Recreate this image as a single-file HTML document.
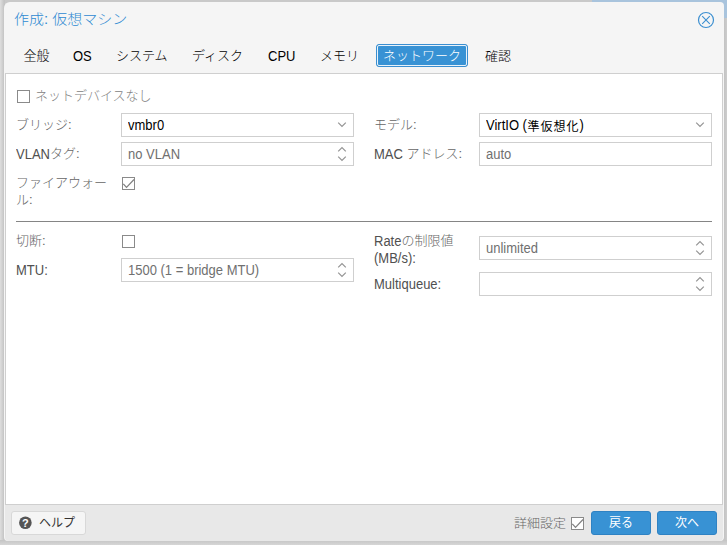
<!DOCTYPE html>
<html lang="ja">
<head>
<meta charset="utf-8">
<title>作成: 仮想マシン</title>
<style>
html,body{margin:0;padding:0;}
body{width:727px;height:545px;overflow:hidden;position:relative;background:#d2d2d2;
  font-family:"Liberation Sans","Noto Sans CJK JP",sans-serif;font-size:13px;color:#000;font-weight:300;}
.abs{position:absolute;}
#bgtop{left:0;top:0;width:727px;height:3px;background:linear-gradient(90deg,#c9c9c9 0,#c9c9c9 592px,#a9c4dd 592px);}
#bgright{left:723px;top:0;width:4px;height:18px;background:#a9c4dd;}
#bgright2{left:723px;top:18px;width:4px;height:527px;background:linear-gradient(90deg,#c0c0c0 0,#c6c6c6 2px,#cdcdcd 4px);}
#bgleft{left:0;top:0;width:5px;height:545px;background:linear-gradient(90deg,#dedede 0,#d2d2d2 2px,#c4c4c4 4px);}
#bgbottom{left:0;top:540px;width:727px;height:5px;background:linear-gradient(180deg,#c4c4c4 0,#cccccc 2px,#d6d6d6 5px);}
#win{left:4px;top:2px;width:720px;height:539px;background:#f5f5f5;border-radius:6px 4px 4px 4px;box-sizing:border-box;}
#title{left:14px;top:9px;font-size:15px;line-height:20px;color:#2f8ad2;white-space:nowrap;font-weight:300;transform:scaleY(0.94);transform-origin:0 80%;}
.tab{top:43.5px;height:23px;line-height:23px;font-size:13px;color:#000;white-space:nowrap;}
.k{display:inline-block;transform:translateY(1px) scaleY(0.92);transform-origin:0 85%;}
.tl{display:inline-block;transform:translateY(-0.5px) scaleY(1.065);transform-origin:0 0;}
#tabact{left:376px;top:44px;width:92px;height:23px;box-sizing:border-box;border:1px solid #3a8ed0;border-radius:3px;background:#3892d4;}
#tabact i{position:absolute;left:0;top:0;right:0;bottom:0;border:1px solid #e8f2fa;border-radius:2px;}
#body{left:5px;top:73px;width:718px;height:432px;box-sizing:border-box;background:#fff;border:1px solid #cfcfcf;}
.lbl{color:#666;font-size:13px;line-height:17px;white-space:nowrap;}
.l{color:#505050;display:inline-block;transform:scaleY(1.075);transform-origin:0 0;}
.fld{height:24px;box-sizing:border-box;border:1px solid #cfcfcf;background:#fff;font-size:13px;line-height:22px;padding-left:6px;color:#000;white-space:nowrap;}
.fld.em{color:#707070;}
.fld .j{font-weight:400;font-size:12px;letter-spacing:1px;margin-left:0.5px;position:relative;top:1.5px;color:#000;}
.fld span{display:inline-block;transform:scaleY(1.067);transform-origin:0 0;}
.cb{width:13px;height:13px;box-sizing:border-box;border:1px solid #8a8a8a;background:#fff;}
#hr{left:16px;top:221px;width:696px;height:1px;background:#858585;}
#foot{left:5px;top:505px;width:718px;height:36px;background:#e8e8e8;border-radius:0 0 4px 4px;}
.btn{height:24px;box-sizing:border-box;border-radius:3px;font-size:12px;font-weight:400;line-height:22px;text-align:center;white-space:nowrap;}
.btnb{background:#3892d4;border:1px solid #2f82c3;color:#fff;}
.btng{background:#f5f5f5;border:1px solid #d8d8d8;color:#333;}
svg{position:absolute;overflow:visible;}
</style>
</head>
<body>
<div class="abs" id="bgtop"></div>
<div class="abs" id="bgright"></div>
<div class="abs" id="bgright2"></div>
<div class="abs" id="bgleft"></div>
<div class="abs" id="bgbottom"></div>
<div class="abs" id="win"></div>
<div class="abs" id="title">作成: 仮想マシン</div>

<svg style="left:697px;top:11px" width="18" height="18" viewBox="0 0 18 18"><circle cx="9" cy="9" r="7.5" fill="none" stroke="#3c8fd0" stroke-width="1.2"/><path d="M5.2 5.2 L12.8 12.8 M12.8 5.2 L5.2 12.8" stroke="#3c8fd0" stroke-width="1.1" fill="none"/></svg>

<div class="abs tab" style="left:23.5px">全般</div>
<div class="abs tab" style="left:73px"><span class="tl">OS</span></div>
<div class="abs tab" style="left:116px">システム</div>
<div class="abs tab" style="left:192px">ディスク</div>
<div class="abs tab" style="left:268px"><span class="tl">CPU</span></div>
<div class="abs tab" style="left:320px">メモリ</div>
<div class="abs" id="tabact"><i></i></div>
<div class="abs tab" style="left:383px;top:44px;color:#fff">ネットワーク</div>
<div class="abs tab" style="left:485px"><span class="k">確認</span></div>

<div class="abs" id="body"></div>

<div class="abs cb" style="left:17px;top:90px"></div>
<div class="abs lbl" style="left:35px;top:87px;color:#828282">ネットデバイスなし</div>

<div class="abs lbl" style="left:16px;top:116px">ブリッジ:</div>
<div class="abs fld" style="left:121px;top:113px;width:233px"><span>vmbr0</span></div>
<div class="abs lbl" style="left:16px;top:145px"><span class="l">VLAN</span>タグ:</div>
<div class="abs fld em" style="left:121px;top:142px;width:233px"><span>no VLAN</span></div>
<div class="abs lbl" style="left:16px;top:174px">ファイアウォー<br>ル:</div>
<div class="abs cb" style="left:122px;top:177px"></div>

<div class="abs lbl" style="left:374px;top:116px">モデル:</div>
<div class="abs fld" style="left:479px;top:113px;width:233px"><span>VirtIO (</span><b class="j">準仮想化</b><span>)</span></div>
<div class="abs lbl" style="left:374px;top:145px"><span class="l">MAC</span> アドレス:</div>
<div class="abs fld em" style="left:479px;top:142px;width:233px"><span>auto</span></div>

<div class="abs" id="hr"></div>

<div class="abs lbl" style="left:16px;top:232px">切断:</div>
<div class="abs cb" style="left:122px;top:235px"></div>
<div class="abs lbl" style="left:16px;top:261px"><span class="l">MTU:</span></div>
<div class="abs fld em" style="left:121px;top:258px;width:233px"><span>1500 (1 = bridge MTU)</span></div>

<div class="abs lbl" style="left:374px;top:232px"><span class="l">Rate</span>の制限値<br><span class="l">(MB/s):</span></div>
<div class="abs fld em" style="left:479px;top:236px;width:233px"><span>unlimited</span></div>
<div class="abs lbl" style="left:374px;top:275px"><span class="l">Multiqueue:</span></div>
<div class="abs fld" style="left:479px;top:272px;width:233px"></div>

<div class="abs" id="foot"></div>
<div class="abs btn btng" style="left:11px;top:511px;width:75px"></div>
<div class="abs" style="left:39px;top:512px;font-size:12px;line-height:22px;color:#333;font-weight:400">ヘルプ</div>
<div class="abs lbl" style="left:514px;top:514px"><span class="k">詳細設定</span></div>
<div class="abs cb" style="left:571px;top:517px"></div>
<div class="abs btn btnb" style="left:591px;top:511px;width:60px">戻る</div>
<div class="abs btn btnb" style="left:657px;top:511px;width:60px">次へ</div>
<svg style="left:0;top:0;pointer-events:none" width="727" height="545" viewBox="0 0 727 545" fill="none" stroke="#959595" stroke-width="1.25">
<path d="M338.2 122.6 L342 126.4 L345.8 122.6"/>
<path d="M696.2 122.6 L700 126.4 L703.8 122.6"/>
<path d="M338.2 151.4 L342 147.6 L345.8 151.4 M338.2 156.6 L342 160.4 L345.8 156.6"/>
<path d="M338.2 267.4 L342 263.6 L345.8 267.4 M338.2 272.6 L342 276.4 L345.8 272.6"/>
<path d="M696.2 245.4 L700 241.6 L703.8 245.4 M696.2 250.6 L700 254.4 L703.8 250.6"/>
<path d="M696.2 281.4 L700 277.6 L703.8 281.4 M696.2 286.6 L700 290.4 L703.8 286.6"/>
<path d="M123.3 183.8 L126.5 187.4 L134 179.5" stroke="#808080" stroke-width="1.2"/>
<path d="M572.3 523.8 L575.5 527.4 L583 519.5" stroke="#808080" stroke-width="1.2"/>
<circle cx="25.4" cy="522.7" r="6.3" fill="#555" stroke="none"/>
<text x="25.4" y="526.6" text-anchor="middle" font-family="Liberation Sans, sans-serif" font-weight="bold" font-size="11" fill="#fff" stroke="none">?</text>
</svg>
</body>
</html>
